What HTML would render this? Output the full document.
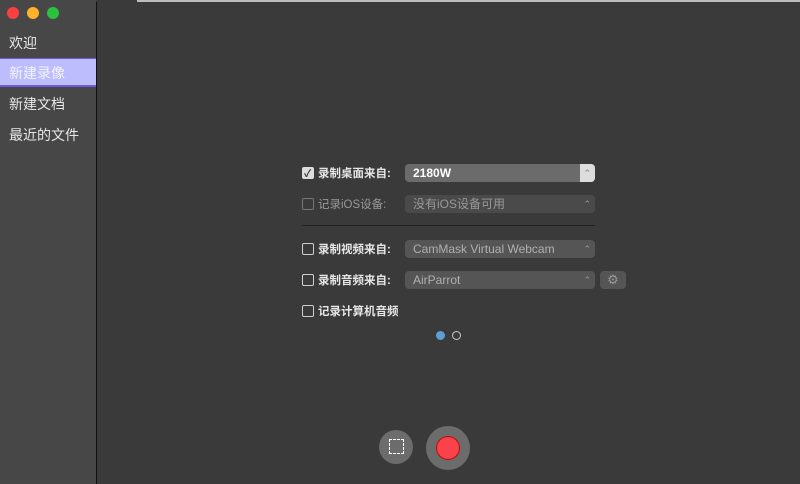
<!DOCTYPE html>
<html><head><meta charset="utf-8"><style>
body{margin:0;width:800px;height:484px;overflow:hidden;background:#3a3a3a;font-family:"Liberation Sans","Noto Sans CJK SC",sans-serif;position:relative}
.top{position:absolute;left:137px;top:0;width:663px;height:2px;background:#bdbdbd}
.side{position:absolute;left:0;top:0;width:96px;height:484px;background:#474747}
.vl{position:absolute;left:96px;top:2px;width:1px;height:482px;background:#111}
.dot{position:absolute;top:7px;width:12px;height:12px;border-radius:50%}
.it{position:absolute;left:9px;font-size:14px;color:#e8e8e8}
.sel{position:absolute;left:0;top:58px;width:96px;height:29px;background:#bdbcfd;border-top:1px solid #6a5ae0;border-bottom:2px solid #6a5ae0;box-sizing:border-box}
.lab{position:absolute;font-size:11.5px;font-weight:bold;color:#e6e6e6}
.cb{position:absolute;left:302px;width:10px;height:10px;border:1px solid #cfcfcf;border-radius:2px}
.pop{position:absolute;left:405px;width:190px;height:18px;border-radius:4px;background:#555;color:#b0b0b0;font-size:12px;line-height:19px;padding-left:8px;box-sizing:border-box}
.pop:after{content:"⌃";position:absolute;right:4px;top:0;font-size:9px;color:#999}
</style></head><body>
<div class="side"></div><div class="top"></div><div class="vl"></div>
<div class="dot" style="left:7px;background:#fc4040"></div>
<div class="dot" style="left:27px;background:#fdb22a"></div>
<div class="dot" style="left:47px;background:#2bc23e"></div>
<div class="it" style="top:33px">欢迎</div>
<div class="sel"></div>
<div class="it" style="top:63px;color:#f4f4ff">新建录像</div>
<div class="it" style="top:94px">新建文档</div>
<div class="it" style="top:125px">最近的文件</div>

<div class="cb" style="top:167px;background:#ddd;border-color:#ddd"><span style="position:absolute;left:1px;top:-3px;font-size:10px;color:#333;font-weight:bold">✓</span></div>
<div class="lab" style="left:318px;top:165px">录制桌面来自:</div>
<div class="pop" style="top:164px;background:#6b6b6b;color:#fff;font-weight:bold">2180W<span style="position:absolute;right:0;top:0;width:15px;height:18px;background:#ddd;border-radius:0 4px 4px 0"></span></div>

<div class="cb" style="top:198px;border-color:#777"></div>
<div class="lab" style="left:318px;top:196px;color:#999;font-weight:normal">记录iOS设备:</div>
<div class="pop" style="top:195px;background:#4a4a4a;color:#999">没有iOS设备可用</div>

<div style="position:absolute;left:302px;top:225px;width:293px;height:1px;background:#222"></div>

<div class="cb" style="top:243px"></div>
<div class="lab" style="left:318px;top:241px">录制视频来自:</div>
<div class="pop" style="top:240px">CamMask Virtual Webcam</div>

<div class="cb" style="top:274px"></div>
<div class="lab" style="left:318px;top:272px">录制音频来自:</div>
<div class="pop" style="top:271px">AirParrot</div>
<div style="position:absolute;left:600px;top:271px;width:26px;height:18px;border-radius:4px;background:#555;color:#999;text-align:center;font-size:13px;line-height:18px">⚙</div>

<div class="cb" style="top:305px"></div>
<div class="lab" style="left:318px;top:303px">记录计算机音频</div>

<div style="position:absolute;left:436px;top:331px;width:9px;height:9px;border-radius:50%;background:#5aa0d8"></div>
<div style="position:absolute;left:452px;top:331px;width:7px;height:7px;border-radius:50%;border:1px solid #ccc"></div>

<div style="position:absolute;left:379px;top:430px;width:34px;height:34px;border-radius:50%;background:#6c6c6c"></div>
<div style="position:absolute;left:389px;top:439px;width:13px;height:13px;border:1px dashed #fff"></div>
<div style="position:absolute;left:426px;top:426px;width:44px;height:44px;border-radius:50%;background:#6c6c6c"></div>
<div style="position:absolute;left:436px;top:436px;width:22px;height:22px;border-radius:50%;background:#fc4149;border:1px solid #b01018"></div>
</body></html>
